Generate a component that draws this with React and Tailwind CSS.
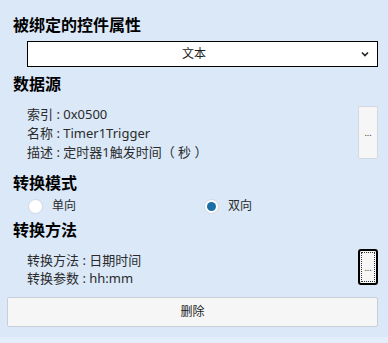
import React from "react";

const font = {
  fontFamily: '"Noto Sans", "Noto Sans CJK SC", sans-serif',
};

const Radio = ({ checked, label }) => (
  <div className="flex items-center">
    <span className="flex h-[15px] w-[15px] items-center justify-center rounded-full border border-[#cfd8e3] bg-white">
      {checked && <span className="h-[9px] w-[9px] rounded-full bg-[#1b6fa6]" />}
    </span>
    <span className="ml-[9px] text-[12px] leading-[16px] text-[#2b2b2b]">{label}</span>
  </div>
);

const App = () => {
  return (
    <div className="h-[343px] w-[388px] bg-[#e4eefa]" style={font}>
      <div className="flex h-[337px] flex-col bg-[#dae8f8] pl-[7px] pr-[10px] pt-[14px]">
        <h2 className="ml-[6px] text-[16px] font-bold leading-[22px] text-black">
          被绑定的控件属性
        </h2>

        <div className="ml-[20px] mt-[5px] flex h-[26px] items-center border border-black bg-white">
          <span className="flex-1 text-center text-[12px] text-[#222]">文本</span>
          <svg width="10" height="10" viewBox="0 0 10 10" className="mr-[7px]">
            <path d="M2 3.5 L5 6.5 L8 3.5" fill="none" stroke="#222" strokeWidth="1.6" />
          </svg>
        </div>

        <h2 className="ml-[6px] mt-[6px] text-[16px] font-bold leading-[22px] text-black">
          数据源
        </h2>

        <div className="mt-[10px] flex items-start justify-between">
          <div className="ml-[20px] text-[13px] leading-[19px] text-[#2b2b2b]">
            <div>索引 : 0x0500</div>
            <div>名称 : Timer1Trigger</div>
            <div>描述 : 定时器1触发时间（ 秒 ）</div>
          </div>
          <button className="mt-[1px] flex h-[53px] w-[20px] items-center justify-center rounded-[2px] border border-[#d3d9e0] bg-[#f6f6f6] text-[9px] leading-none text-[#333]">
            ...
          </button>
        </div>

        <h2 className="ml-[6px] mt-[10px] text-[16px] font-bold leading-[22px] text-black">
          转换模式
        </h2>

        <div className="mt-[4px] flex items-center">
          <div className="ml-[21px] w-[176px]">
            <Radio label="单向" />
          </div>
          <Radio checked label="双向" />
        </div>

        <h2 className="ml-[6px] mt-[5px] text-[16px] font-bold leading-[22px] text-black">
          转换方法
        </h2>

        <div className="mt-[8px] flex items-start justify-between">
          <div className="ml-[20px] mt-[2px] text-[13px] leading-[18px] text-[#2b2b2b]">
            <div>转换方法 : 日期时间</div>
            <div>转换参数 : hh:mm</div>
          </div>
          <button className="flex h-[36px] w-[20px] items-center justify-center rounded-[3px] border-2 border-black bg-[#f6f6f6] p-[1px]">
            <span className="flex h-full w-full items-center justify-center border border-dotted border-[#333] text-[9px] leading-none text-[#333]">
              ...
            </span>
          </button>
        </div>

        <button className="mt-[10px] h-[30px] w-full rounded-[2px] border border-[#c9cfd8] bg-[#f6f6f6] text-[12px] text-[#222]">
          删除
        </button>
      </div>
    </div>
  );
};

export default App;
